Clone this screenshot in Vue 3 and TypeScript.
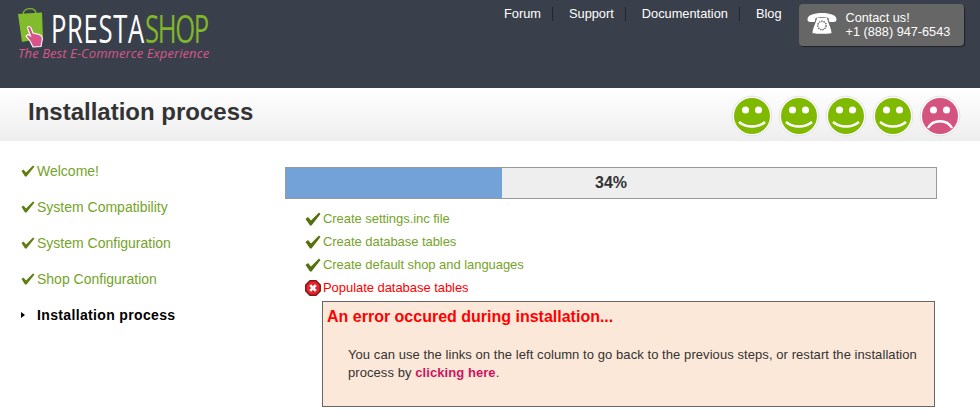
<script setup lang="ts">
const navLinks: string[] = ['Forum', 'Support', 'Documentation', 'Blog']
const sideSteps: string[] = ['Welcome!', 'System Compatibility', 'System Configuration', 'Shop Configuration']
const tasks: string[] = ['Create settings.inc file', 'Create database tables', 'Create default shop and languages']
const moods: boolean[] = [true, true, true, true, false]
const progress = 34
const fillWidth = 33.2
</script>

<template>
  <div class="page">
    <header class="top">
      <div class="logo">
        <div class="logo-row">
          <svg class="bag" width="30" height="41" viewBox="0 0 30 41">
            <path d="M7 6 C8 -1 19 -1 20 5" fill="none" stroke="#7fb52a" stroke-width="1.400" />
            <path d="M2 6 L26 4.500 L27 30 L6 34 Z" fill="#82bc2c" />
            <path d="M14 33 L10 28 L12 26.500 L14.500 28 L11.500 20 C11.500 18 14 18 15 20 L17 25 L23 26.500 C26 27.500 27 30 26 33 L25 38.500 L17 39 Z" fill="#d8548a" stroke="#fff" stroke-width="1.100" />
          </svg>
          <div class="word"><span class="presta">PRESTA</span><span class="shop">SHOP</span></div>
        </div>
        <div class="tagline">The Best E-Commerce Experience</div>
      </div>
      <nav class="nav">
        <a v-for="link in navLinks" :key="link" class="nav-link">{{ link }}</a>
      </nav>
      <div class="contact">
        <svg class="phone" width="30" height="24" viewBox="0 0 30 24">
          <path d="M0.500 7 C0 2 7 0 15 0 C23 0 30 2 29.500 7 C29.500 9.500 23 9.500 22 8.500 L21.500 5 C18 4 12 4 8.500 5 L8 8.500 C7 9.500 0.500 9.500 0.500 7 Z" fill="#fff" />
          <path d="M10 5 H20 C21 10 24 14 24.500 20 C24.500 21 5.500 21 5.500 20 C6 14 9 10 10 5 Z" fill="#fff" />
          <circle cx="15" cy="12.500" r="4.200" fill="none" stroke="#777" stroke-width="1.600" stroke-dasharray="1.500 0.800" />
        </svg>
        <div class="contact-text">Contact us!<br />+1 (888) 947-6543</div>
      </div>
    </header>

    <section class="band">
      <h1>Installation process</h1>
      <div class="moods">
        <svg v-for="(happy, i) in moods" :key="i" class="mood" width="42" height="42" viewBox="0 0 42 42">
          <circle cx="21" cy="21" r="19.800" fill="#fff" stroke="#ddd" stroke-width="0.800" />
          <circle cx="21" cy="21" r="18" :fill="happy ? '#7fba00' : '#d4547f'" />
          <circle cx="14.500" cy="15" r="3.500" fill="#fff" />
          <circle cx="27.500" cy="15" r="3.500" fill="#fff" />
          <path v-if="happy" d="M8 27 C15 33 27 33 34 27" fill="none" stroke="#fff" stroke-width="2.500" />
          <path v-else d="M9 33 C14 24 28 24 33 33" fill="none" stroke="#fff" stroke-width="2.500" />
        </svg>
      </div>
    </section>

    <main class="body">
      <ul class="side">
        <li v-for="step in sideSteps" :key="step" class="side-item">
          <svg class="check" width="14" height="12" viewBox="0 0 14 12"><path d="M0.500 6 L2.500 4.500 L5 7.500 L12 0.500 L13.500 1.500 L5.500 11.500 L4 11.500 Z" fill="#5f7d10" /></svg>
          <span>{{ step }}</span>
        </li>
        <li class="side-item current">
          <span class="arrow"></span>
          <span>Installation process</span>
        </li>
      </ul>

      <div class="content">
        <div class="bar">
          <div class="fill" :style="{ width: fillWidth + '%' }"></div>
          <div class="pct">{{ progress }}%</div>
        </div>
        <ul class="tasks">
          <li v-for="task in tasks" :key="task" class="task">
            <svg class="task-icon" width="16" height="14" viewBox="0 0 16 14"><path d="M0.500 7 L3 5 L6 8.500 L14 0.500 L15.500 2 L6.500 13.500 L5 13.500 Z" fill="#56700f" /></svg>
            <span>{{ task }}</span>
          </li>
          <li class="task failed">
            <svg class="task-icon" width="16" height="16" viewBox="0 0 16 16">
              <path d="M5 0.800 H11 L15.200 5 V11 L11 15.200 H5 L0.800 11 V5 Z" fill="#e0262e" stroke="#8c1016" stroke-width="1.500" stroke-linejoin="round" />
              <path d="M5.200 5.200 L10.800 10.800 M10.800 5.200 L5.200 10.800" stroke="#fff" stroke-width="2.600" />
            </svg>
            <span>Populate database tables</span>
          </li>
        </ul>
        <div class="error">
          <h2>An error occured during installation...</h2>
          <p>You can use the links on the left column to go back to the previous steps, or restart the installation process by <a class="restart">clicking here</a>.</p>
        </div>
      </div>
    </main>
  </div>
</template>

<style scoped>
.page {
  width: 980px;
  height: 420px;
  overflow: hidden;
  background: #fff;
  font-family: "Liberation Sans", Arial, sans-serif;
}
.top {
  height: 88px;
  background: #3a404b;
  display: flex;
  align-items: flex-start;
}
.logo {
  width: 489px;
  padding: 8px 0 0 15px;
  box-sizing: border-box;
}
.logo-row {
  height: 37px;
  display: flex;
  align-items: flex-start;
}
.bag {
  flex: none;
  margin-left: 1px;
  overflow: visible;
}
.word {
  margin: 3px 0 0 5px;
  font-family: "Open Sans", sans-serif;
  font-size: 38px;
  line-height: 34px;
  white-space: nowrap;
  letter-spacing: 1px;
  transform: scaleX(0.675);
  transform-origin: 0 50%;
}
.presta {
  color: #fff;
}
.shop {
  color: #7fb62a;
  letter-spacing: -2px;
}
.tagline {
  margin: 0 0 0 3px;
  color: #d8568a;
  font-family: "Open Sans", sans-serif;
  font-style: italic;
  font-size: 13px;
  letter-spacing: 0.08px;
  line-height: 16px;
  white-space: nowrap;
}
.nav {
  display: flex;
  padding-top: 7px;
  margin-left: 15px;
}
.nav-link {
  color: #fff;
  font-size: 12.800px;
  line-height: 14px;
  padding-right: 11px;
  margin-right: 16px;
  border-right: 1px solid #23272e;
}
.nav-link:last-child {
  border-right: 0;
  padding-right: 0;
  margin-right: 17px;
}
.contact {
  width: 165px;
  height: 42px;
  margin-top: 4px;
  background: #666;
  border-radius: 4px;
  box-shadow: 1px 1px 1px #1f2228;
  display: flex;
  align-items: center;
  padding-left: 8px;
  box-sizing: border-box;
  color: #fff;
}
.contact-text {
  margin-left: 9px;
  font-size: 12.700px;
  line-height: 14px;
}
.band {
  height: 53px;
  background: linear-gradient(#fff, #eee);
  display: flex;
  align-items: flex-start;
  justify-content: space-between;
  padding: 0 19px 0 28px;
}
.band h1 {
  margin: 0;
  color: #333;
  font-size: 24px;
  line-height: 48px;
  font-weight: bold;
}
.moods {
  display: flex;
  gap: 5px;
  margin-top: 7px;
}
.mood {
  display: block;
}
.body {
  display: flex;
  padding-top: 12px;
}
.side {
  list-style: none;
  margin: 0;
  padding: 0 0 0 21px;
  width: 285px;
  box-sizing: border-box;
}
.side-item {
  height: 36px;
  display: flex;
  align-items: center;
  gap: 2px;
  color: #76a32a;
  font-size: 14px;
}
.check {
  flex: none;
}
.current {
  color: #000;
  font-weight: bold;
  letter-spacing: 0.35px;
  gap: 13px;
}
.arrow {
  width: 0;
  height: 0;
  border-left: 4px solid #000;
  border-top: 3px solid transparent;
  border-bottom: 3px solid transparent;
  margin-right: -1px;
}
.content {
  width: 652px;
  padding-top: 14px;
}
.bar {
  height: 32px;
  position: relative;
  background: #eee;
  border: 1px solid #999;
  box-sizing: border-box;
}
.fill {
  height: 100%;
  background: #73a2d9;
}
.pct {
  position: absolute;
  inset: 0;
  text-align: center;
  font-size: 16px;
  font-weight: bold;
  line-height: 30px;
  color: #333;
}
.tasks {
  list-style: none;
  margin: 0;
  padding: 8px 0 0 20px;
}
.task {
  height: 23px;
  display: flex;
  align-items: center;
  gap: 2px;
  color: #76a32a;
  font-size: 13px;
  letter-spacing: -0.05px;
}
.task-icon {
  flex: none;
}
.failed {
  color: #f00;
}
.error {
  width: 613px;
  height: 106px;
  margin: 2px 0 0 37px;
  background: #fce8d9;
  border: 1px solid #666;
  box-sizing: border-box;
  padding: 5px 4px;
}
.error h2 {
  margin: 0;
  color: #f00;
  font-size: 16px;
  line-height: 20px;
  font-weight: bold;
}
.error p {
  margin: 19px 10px 0 21px;
  color: #333;
  font-size: 13px;
  letter-spacing: 0.07px;
  line-height: 18px;
}
.restart {
  color: #d0135e;
  font-weight: bold;
}
</style>
